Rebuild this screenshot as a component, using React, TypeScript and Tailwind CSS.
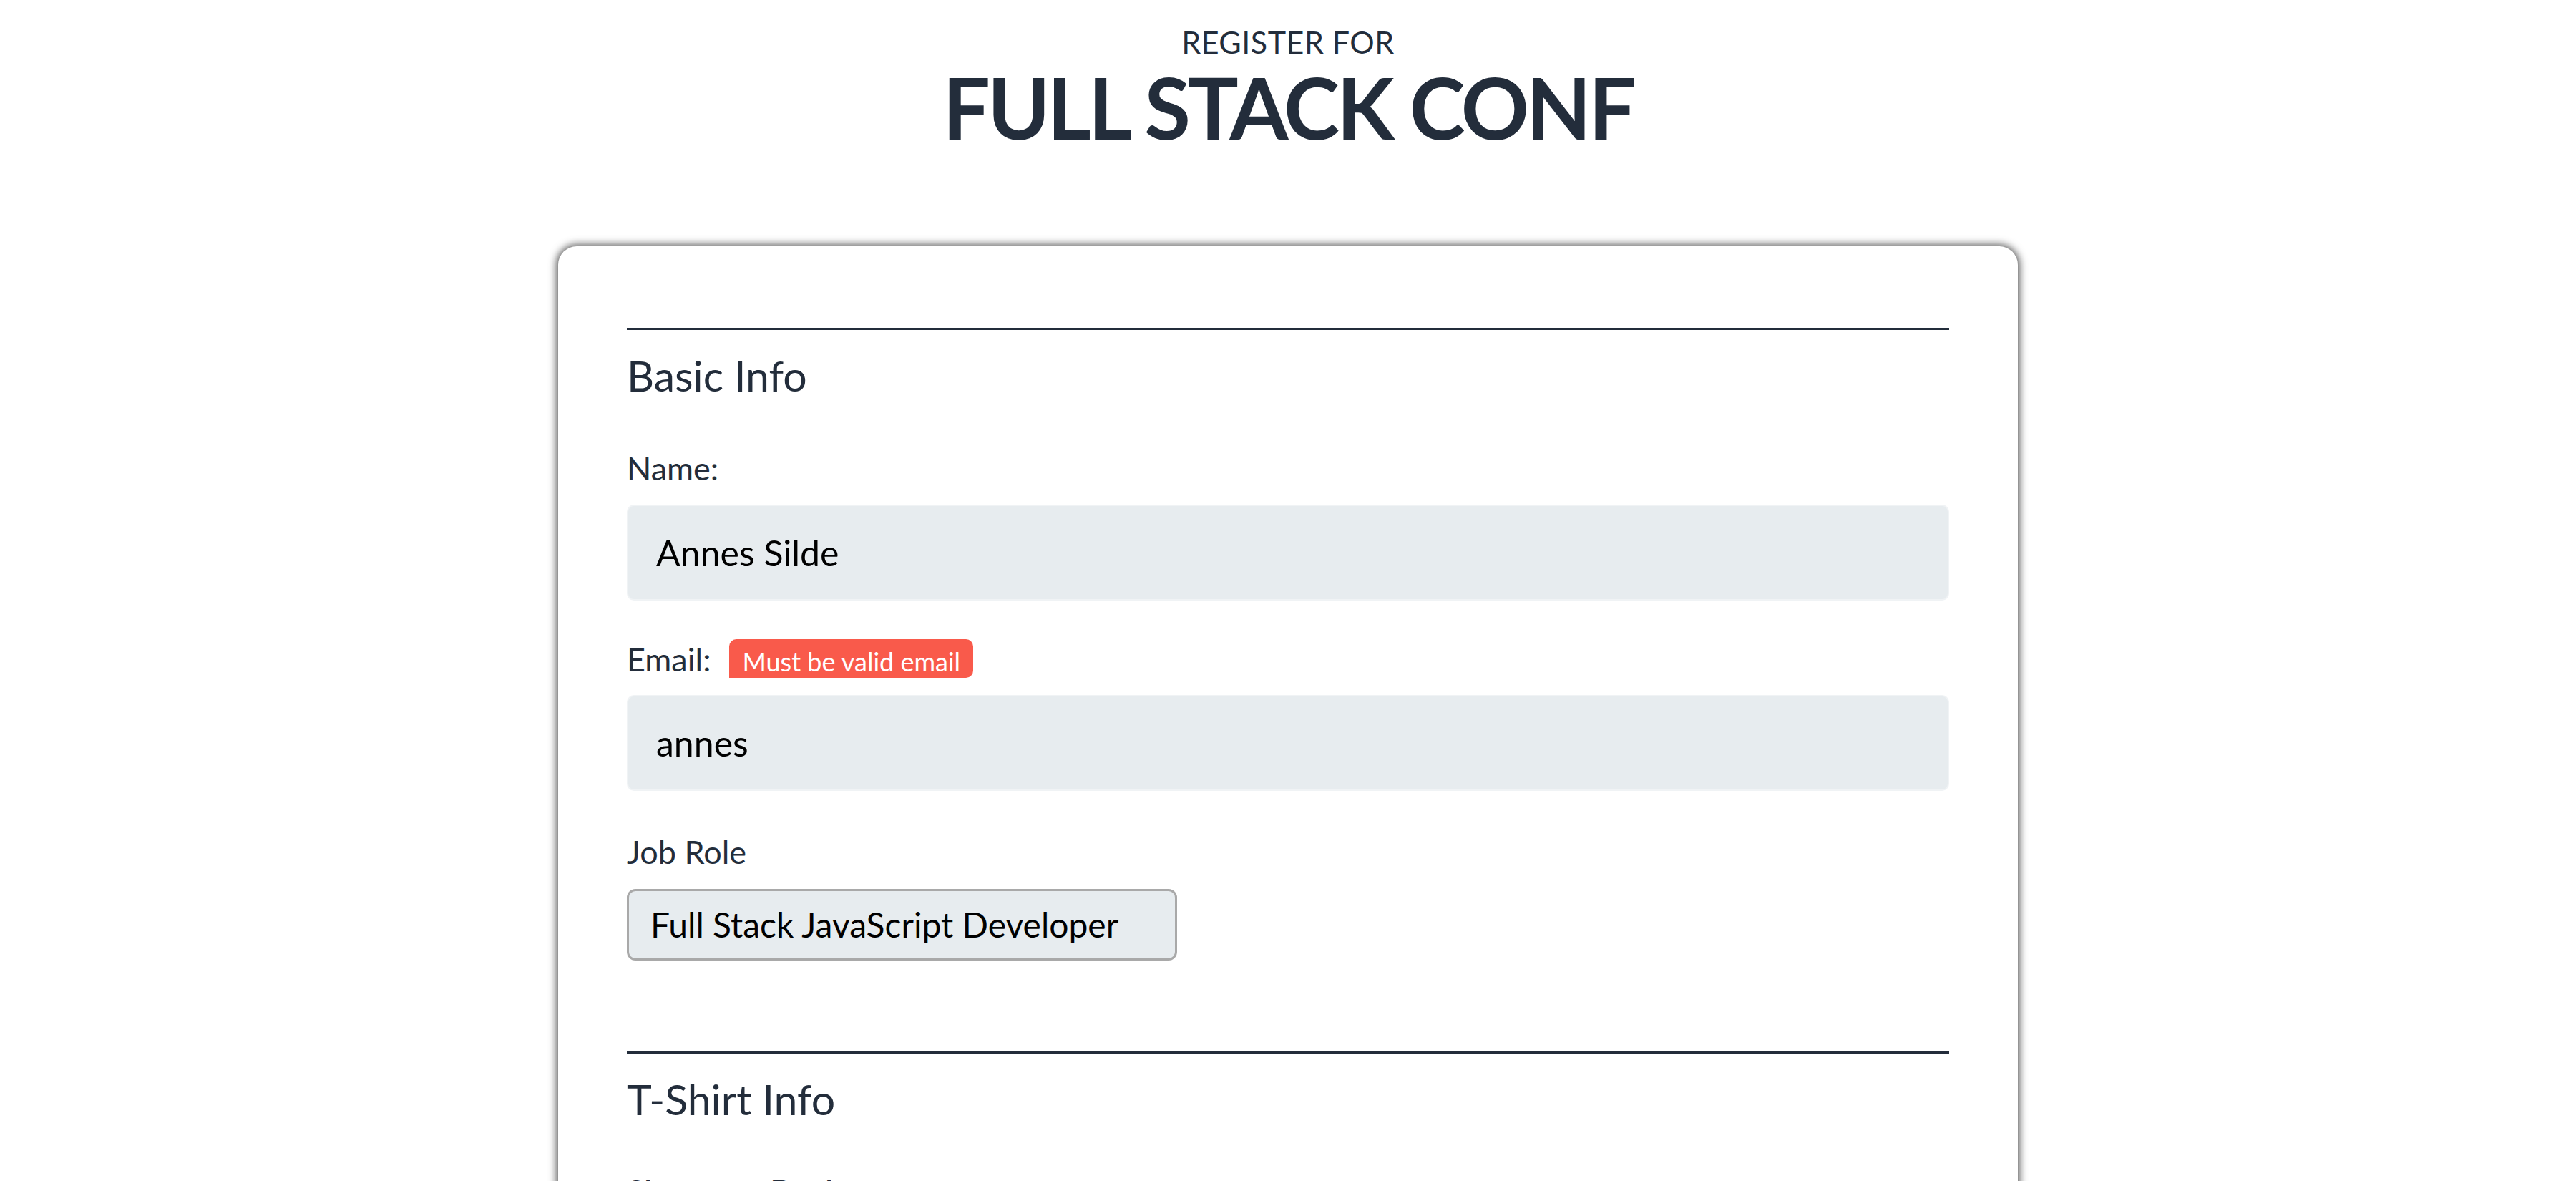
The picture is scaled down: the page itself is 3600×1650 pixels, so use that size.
import React from "react";

const Label = ({ children, className = "" }: { children: React.ReactNode; className?: string }) => (
    <label className={`block text-[45px] leading-[52px] ${className}`}>{children}</label>
);

const TextInput = ({ value, type = "text" }: { value: string; type?: string }) => (
    <input
        type={type}
        defaultValue={value}
        className="block mt-[25px] h-[134px] w-full rounded-[10px] border-2 border-[#f0f3f5] bg-[#e7ecef] px-[39px] text-[50px] text-black outline-none"
    />
);

export default function App() {
    return (
        <div className="min-h-screen bg-white font-['Lato',sans-serif] text-[#232d3b]">
            <header className="pt-[35px] text-center">
                <span className="block text-[43px] leading-[48px] tracking-[0.5px] uppercase">Register for</span>
                <h1 className="mt-[8px] text-[118px] font-bold leading-[118px] tracking-[-4px]">FULL STACK CONF</h1>
            </header>

            <form className="mx-auto mt-[135px] w-[2040px] rounded-[26px] bg-white px-[96px] pt-[114px] pb-[120px] shadow-[0_0_12px_2px_rgba(0,0,0,0.7)]">
                <section className="border-t-[3px] border-[#232d3b]">
                    <h2 className="mt-[29px] text-[59px] leading-[70px]">Basic Info</h2>

                    <Label className="mt-[68px]">Name:</Label>
                    <TextInput value="Annes Silde" />

                    <div className="mt-[54px] flex items-baseline">
                        <label className="text-[45px] leading-[52px]">Email:</label>
                        <span className="ml-[26px] rounded-[10px] rounded-bl-none bg-[#f95a4b] px-[18px] pt-[9px] pb-[1px] text-[36px] leading-[44px] text-white">
                            Must be valid email
                        </span>
                    </div>
                    <div className="-mt-[1px]">
                        <TextInput value="annes" type="email" />
                    </div>

                    <Label className="mt-[59px]">Job Role</Label>
                    <select
                        defaultValue="full-stack"
                        className="mt-[26px] block h-[100px] w-[769px] appearance-none rounded-[12px] border-[3px] border-[#a9a9a9] bg-[#e7ecef] pl-[30px] text-[48px] text-black outline-none"
                    >
                        <option value="full-stack">Full Stack JavaScript Developer</option>
                        <option value="front-end">Front End Developer</option>
                        <option value="back-end">Back End Developer</option>
                        <option value="designer">Designer</option>
                        <option value="other">Other</option>
                    </select>
                </section>

                <section className="mt-[127px] border-t-[3px] border-[#232d3b]">
                    <h2 className="mt-[29px] text-[59px] leading-[70px]">T-Shirt Info</h2>

                    <div className="mt-[67px] flex">
                        <div className="w-[200px]">
                            <Label>Size:</Label>
                            <select className="mt-[26px] block h-[100px] w-[160px] appearance-none rounded-[12px] border-[3px] border-[#a9a9a9] bg-[#e7ecef] pl-[30px] text-[48px]">
                                <option>S</option>
                                <option>M</option>
                                <option>L</option>
                            </select>
                        </div>
                        <div>
                            <Label>Design:</Label>
                            <select className="mt-[26px] block h-[100px] w-[500px] appearance-none rounded-[12px] border-[3px] border-[#a9a9a9] bg-[#e7ecef] pl-[30px] text-[48px]">
                                <option>Select Theme</option>
                            </select>
                        </div>
                    </div>
                </section>
            </form>
        </div>
    );
}
